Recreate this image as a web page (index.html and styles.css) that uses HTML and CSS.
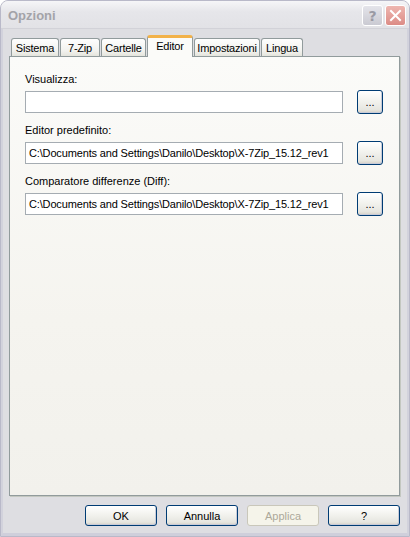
FILE: index.html
```html
<!DOCTYPE html>
<html lang="it">

<head>
    <meta charset="UTF-8">
    <title>Opzioni</title>
    <link rel="stylesheet" href="styles.css">
</head>

<body>
    <div class="window">
        <div class="titlebar">
            <span class="title">Opzioni</span>
            <div class="caption-buttons">
                <span class="cap-btn cap-help">?</span>
                <span class="cap-btn cap-close">
                    <svg width="13" height="13" viewBox="0 0 13 13">
                        <path d="M2 2 L11 11 M11 2 L2 11" stroke="#fff" stroke-width="2" stroke-linecap="square" fill="none" />
                    </svg>
                </span>
            </div>
        </div>

        <div class="client">
            <div class="tabs">
                <div class="tab tab-sistema">Sistema</div>
                <div class="tab tab-7zip">7-Zip</div>
                <div class="tab tab-cartelle">Cartelle</div>
                <div class="tab tab-editor active">Editor</div>
                <div class="tab tab-impostazioni">Impostazioni</div>
                <div class="tab tab-lingua">Lingua</div>
            </div>

            <div class="panel">
                <div class="label">Visualizza:</div>
                <div class="field-row">
                    <div class="field"></div>
                    <button class="btn browse">...</button>
                </div>

                <div class="label">Editor predefinito:</div>
                <div class="field-row">
                    <div class="field">C:\Documents and Settings\Danilo\Desktop\X-7Zip_15.12_rev1</div>
                    <button class="btn browse">...</button>
                </div>

                <div class="label">Comparatore differenze (Diff):</div>
                <div class="field-row">
                    <div class="field">C:\Documents and Settings\Danilo\Desktop\X-7Zip_15.12_rev1</div>
                    <button class="btn browse">...</button>
                </div>
            </div>

            <div class="footer">
                <button class="btn">OK</button>
                <button class="btn">Annulla</button>
                <button class="btn disabled">Applica</button>
                <button class="btn">?</button>
            </div>
        </div>
    </div>
</body>

</html>
```

FILE: styles.css
```css
body {
    margin: 0;
    padding: 0;
    background-color: #ffffff;
    font-family: "Liberation Sans", Arial, sans-serif;
    font-size: 11px;
    color: #000;
}

.window {
    width: 410px;
    height: 537px;
    box-sizing: border-box;
    border: 1px solid #b9b9c9;
    border-radius: 8px 8px 0 0;
    background-color: #dedee2;
    display: flex;
    flex-direction: column;
    overflow: hidden;
}

.titlebar {
    height: 27px;
    display: flex;
    align-items: center;
    justify-content: space-between;
    padding: 0 3px 0 7px;
    background: linear-gradient(#f6f6f8, #e6e6ea 40%, #e2e2e6);
    border-bottom: 1px solid #d2d2d8;
}

.title {
    font-family: "Liberation Sans", Arial, sans-serif;
    font-weight: bold;
    font-size: 13px;
    color: #a3a3a8;
    margin-top: 2px;
}

.caption-buttons {
    display: flex;
    gap: 2px;
    margin-top: 2px;
}

.cap-btn {
    width: 19px;
    height: 19px;
    border: 1px solid #fff;
    border-radius: 3px;
    display: flex;
    align-items: center;
    justify-content: center;
}

.cap-help {
    background: linear-gradient(#e4e4ea, #cacad2);
    color: #9a9aa4;
    font-family: "DejaVu Sans", sans-serif;
    font-weight: bold;
    font-size: 14px;
}

.cap-close {
    background: linear-gradient(#eeb6b0, #dc8c86);
}

.client {
    flex: 1;
    display: flex;
    flex-direction: column;
    padding: 0 7px 0 6px;
    border-left: 2px solid #d2d2dc;
    border-right: 2px solid #d2d2dc;
    border-bottom: 3px solid #cfcfdb;
}

.tabs {
    display: flex;
    align-items: flex-end;
    padding-left: 2px;
    margin-top: 6px;
    height: 21px;
    position: relative;
    z-index: 1;
}

.tab {
    height: 18px;
    margin-right: 1px;
    box-sizing: border-box;
    display: flex;
    align-items: center;
    justify-content: center;
    border: 1px solid #919b9c;
    border-bottom: none;
    border-radius: 3px 3px 0 0;
    background: linear-gradient(#fefefe, #f2f2ee 70%, #e4e4dc);
    letter-spacing: -0.2px;
}

.tab-sistema { width: 48px; }
.tab-7zip { width: 40px; }
.tab-cartelle { width: 45px; }
.tab-editor { width: 46px; }
.tab-impostazioni { width: 66px; }
.tab-lingua { width: 42px; }

.tab.active {
    height: 22px;
    margin-bottom: -1px;
    border-top: 3px solid #f2b24a;
    background: #fbfbf9;
    align-items: flex-start;
    padding-top: 2px;
}

.panel {
    height: 440px;
    box-sizing: border-box;
    border: 1px solid #919b9c;
    background: linear-gradient(#fbfbf9, #f5f4ef 60%, #f2f1ec);
    padding: 16px 15px 0 15px;
    box-shadow: 1px 1px 0 #c3c7c0;
}

.label {
    height: 13px;
    line-height: 13px;
    margin-bottom: 4px;
}

.field-row {
    display: flex;
    align-items: center;
    height: 24px;
    gap: 14px;
    margin-bottom: 10px;
}

.field {
    width: 318px;
    height: 22px;
    box-sizing: border-box;
    border: 1px solid #a5acb2;
    background: #fff;
    padding: 0 3px;
    line-height: 20px;
    white-space: nowrap;
    overflow: hidden;
    letter-spacing: -0.15px;
}

.btn {
    font-family: "Liberation Sans", Arial, sans-serif;
    font-size: 11px;
    color: #000;
    width: 72px;
    height: 21px;
    padding: 0;
    border: 1px solid #003c74;
    border-radius: 3px;
    background: linear-gradient(#ffffff, #f4f4f0 40%, #e6e6e0 85%, #d6d0c5);
    box-shadow: inset -1px -1px 0 #c8cbd8;
}

.btn.browse {
    width: 26px;
    height: 24px;
}

.btn.disabled {
    border-color: #c9c7ba;
    background: #f5f4ea;
    color: #aca899;
    box-shadow: none;
}

.footer {
    display: flex;
    justify-content: flex-end;
    gap: 9px;
    margin-top: 9px;
}
```
